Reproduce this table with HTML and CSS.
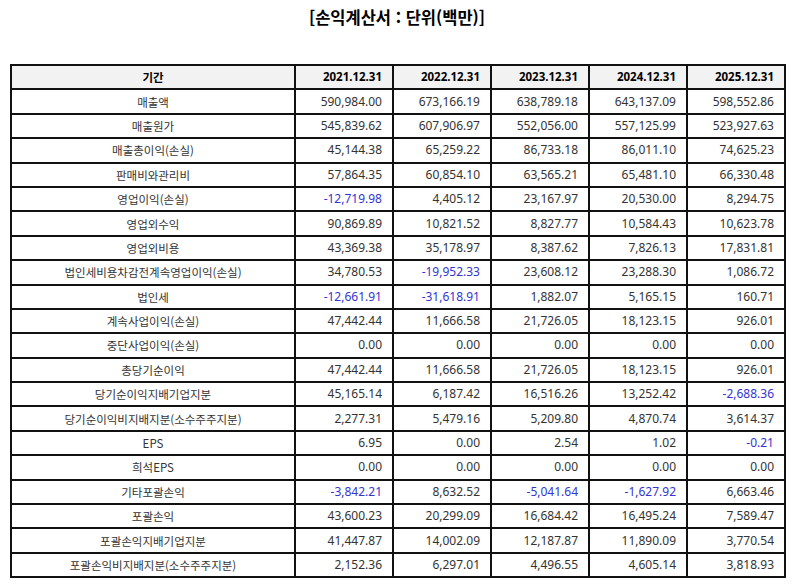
FILE: index.html
```html
<!DOCTYPE html>
<html lang="ko">
<head>
<meta charset="utf-8">
<link rel="stylesheet" href="styles.css">
</head>
<body>
<h1 class="title">[손익계산서 : 단위(백만)]</h1>
<table class="fin">
<colgroup><col class="c-label"><col class="c-num"><col class="c-num"><col class="c-num"><col class="c-num"><col class="c-num"></colgroup>
<thead>
<tr><th class="lbl">기간</th><th>2021.12.31</th><th>2022.12.31</th><th>2023.12.31</th><th>2024.12.31</th><th>2025.12.31</th></tr>
</thead>
<tbody>
<tr><td class="lbl">매출액</td><td>590,984.00</td><td>673,166.19</td><td>638,789.18</td><td>643,137.09</td><td>598,552.86</td></tr>
<tr><td class="lbl">매출원가</td><td>545,839.62</td><td>607,906.97</td><td>552,056.00</td><td>557,125.99</td><td>523,927.63</td></tr>
<tr><td class="lbl">매출총이익(손실)</td><td>45,144.38</td><td>65,259.22</td><td>86,733.18</td><td>86,011.10</td><td>74,625.23</td></tr>
<tr><td class="lbl">판매비와관리비</td><td>57,864.35</td><td>60,854.10</td><td>63,565.21</td><td>65,481.10</td><td>66,330.48</td></tr>
<tr><td class="lbl">영업이익(손실)</td><td class="neg">-12,719.98</td><td>4,405.12</td><td>23,167.97</td><td>20,530.00</td><td>8,294.75</td></tr>
<tr><td class="lbl">영업외수익</td><td>90,869.89</td><td>10,821.52</td><td>8,827.77</td><td>10,584.43</td><td>10,623.78</td></tr>
<tr><td class="lbl">영업외비용</td><td>43,369.38</td><td>35,178.97</td><td>8,387.62</td><td>7,826.13</td><td>17,831.81</td></tr>
<tr><td class="lbl">법인세비용차감전계속영업이익(손실)</td><td>34,780.53</td><td class="neg">-19,952.33</td><td>23,608.12</td><td>23,288.30</td><td>1,086.72</td></tr>
<tr><td class="lbl">법인세</td><td class="neg">-12,661.91</td><td class="neg">-31,618.91</td><td>1,882.07</td><td>5,165.15</td><td>160.71</td></tr>
<tr><td class="lbl">계속사업이익(손실)</td><td>47,442.44</td><td>11,666.58</td><td>21,726.05</td><td>18,123.15</td><td>926.01</td></tr>
<tr><td class="lbl">중단사업이익(손실)</td><td>0.00</td><td>0.00</td><td>0.00</td><td>0.00</td><td>0.00</td></tr>
<tr><td class="lbl">총당기순이익</td><td>47,442.44</td><td>11,666.58</td><td>21,726.05</td><td>18,123.15</td><td>926.01</td></tr>
<tr><td class="lbl">당기순이익지배기업지분</td><td>45,165.14</td><td>6,187.42</td><td>16,516.26</td><td>13,252.42</td><td class="neg">-2,688.36</td></tr>
<tr><td class="lbl">당기순이익비지배지분(소수주주지분)</td><td>2,277.31</td><td>5,479.16</td><td>5,209.80</td><td>4,870.74</td><td>3,614.37</td></tr>
<tr><td class="lbl">EPS</td><td>6.95</td><td>0.00</td><td>2.54</td><td>1.02</td><td class="neg">-0.21</td></tr>
<tr><td class="lbl">희석EPS</td><td>0.00</td><td>0.00</td><td>0.00</td><td>0.00</td><td>0.00</td></tr>
<tr><td class="lbl">기타포괄손익</td><td class="neg">-3,842.21</td><td>8,632.52</td><td class="neg">-5,041.64</td><td class="neg">-1,627.92</td><td>6,663.46</td></tr>
<tr><td class="lbl">포괄손익</td><td>43,600.23</td><td>20,299.09</td><td>16,684.42</td><td>16,495.24</td><td>7,589.47</td></tr>
<tr><td class="lbl">포괄손익지배기업지분</td><td>41,447.87</td><td>14,002.09</td><td>12,187.87</td><td>11,890.09</td><td>3,770.54</td></tr>
<tr><td class="lbl">포괄손익비지배지분(소수주주지분)</td><td>2,152.36</td><td>6,297.01</td><td>4,496.55</td><td>4,605.14</td><td>3,818.93</td></tr>
</tbody>
</table>
</body>
</html>
```

FILE: styles.css
```css
html, body {
  margin: 0;
  padding: 0;
  background: #ffffff;
}
body {
  padding: 0 10px;
  font-family: "Noto Sans", "Noto Sans CJK KR", sans-serif;
  color: #111;
}
.title {
  margin: 0;
  padding-top: 5px;
  height: 64px;
  box-sizing: border-box;
  text-align: center;
  font-family: "Noto Sans CJK KR", sans-serif;
  font-size: 16.5px;
  line-height: 24px;
  font-weight: 700;
  color: #000;
}
.fin {
  width: 774px;
  border-collapse: collapse;
  table-layout: fixed;
  font-size: 12px;
  border: 2px solid #000;
}
.c-label { width: 284px; }
.c-num { width: 98px; }
.fin th, .fin td {
  border: 2px solid #111;
  height: 22.4px;
  padding: 0 10px 0 4px;
  text-align: right;
  line-height: 14px;
  white-space: nowrap;
}
.fin th {
  background: #f2f2f2;
  font-size: 11.5px;
  font-weight: 700;
  color: #000;
}
.fin .lbl {
  text-align: center;
  padding: 0 4px;
  font-size: 11.5px;
  font-family: "Noto Sans CJK KR", sans-serif;
}
.fin td { color: #333; }
.fin td.neg { color: #3434d4; }
```
